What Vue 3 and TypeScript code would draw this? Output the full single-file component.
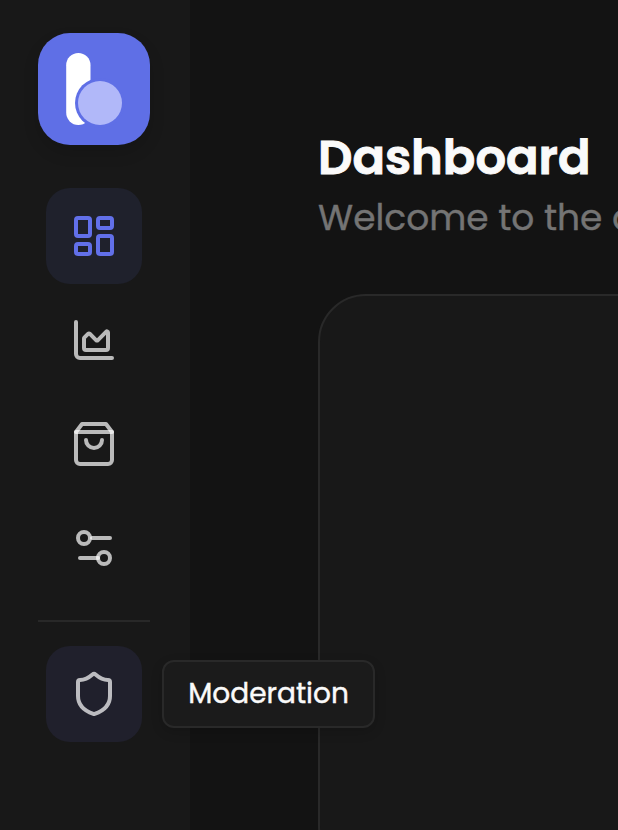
<script setup lang="ts">
interface Shape {
  tag: 'path' | 'rect' | 'circle'
  attrs: Record<string, string | number>
}
interface NavItem {
  id: string
  label: string
  shapes: Shape[]
}

const path = (d: string): Shape => ({ tag: 'path', attrs: { d } })
const rect = (x: number, y: number, width: number, height: number): Shape => ({
  tag: 'rect',
  attrs: { x, y, width, height, rx: 1 },
})
const circle = (cx: number, cy: number, r: number): Shape => ({ tag: 'circle', attrs: { cx, cy, r } })

const items: NavItem[] = [
  { id: 'dashboard', label: 'Dashboard', shapes: [rect(3, 3, 7, 9), rect(14, 3, 7, 5), rect(14, 12, 7, 9), rect(3, 16, 7, 5)] },
  {
    id: 'analytics',
    label: 'Analytics',
    shapes: [
      path('M3 3v16a2 2 0 0 0 2 2h16'),
      path('M7 11.207a.5.5 0 0 1 .146-.353l2-2a.5.5 0 0 1 .708 0l3.292 3.292a.5.5 0 0 0 .708 0l4.292-4.292a.5.5 0 0 1 .854.353V16a1 1 0 0 1-1 1H8a1 1 0 0 1-1-1z'),
    ],
  },
  {
    id: 'store',
    label: 'Store',
    shapes: [path('M6 2 3 6v14a2 2 0 0 0 2 2h14a2 2 0 0 0 2-2V6l-3-4Z'), path('M3 6h18'), path('M16 10a4 4 0 0 1-8 0')],
  },
  {
    id: 'settings',
    label: 'Settings',
    shapes: [path('M20 7h-9'), path('M14 17H5'), circle(17, 17, 3), circle(7, 7, 3)],
  },
]

const moderation: NavItem = {
  id: 'moderation',
  label: 'Moderation',
  shapes: [
    path('M20 13c0 5-3.5 7.5-7.66 8.95a1 1 0 0 1-.67-.01C7.5 20.5 4 18 4 13V6a1 1 0 0 1 1-1c2 0 4.5-1.2 6.24-2.72a1.17 1.17 0 0 1 1.52 0C14.51 3.81 17 5 19 5a1 1 0 0 1 1 1z'),
  ],
}
</script>

<template>
  <div class="shell">
    <aside class="sidebar">
      <div class="logo">
        <svg viewBox="0 0 112 112">
          <rect class="logo-stem" x="28.2" y="20" width="24.3" height="72" rx="12.15" />
          <circle class="logo-gap" cx="62" cy="70" r="25" />
          <circle class="logo-bowl" cx="62" cy="70" r="22" />
        </svg>
      </div>
      <nav class="nav">
        <a v-for="item in items" :key="item.id" class="nav-item" :class="{ active: item.id === 'dashboard' }" :aria-label="item.label">
          <svg class="icon" viewBox="0 0 24 24">
            <component :is="s.tag" v-for="(s, i) in item.shapes" :key="i" v-bind="s.attrs" />
          </svg>
        </a>
      </nav>
      <div class="divider"></div>
      <a class="nav-item hovered">
        <svg class="icon" viewBox="0 0 24 24">
          <component :is="s.tag" v-for="(s, i) in moderation.shapes" :key="i" v-bind="s.attrs" />
        </svg>
        <span class="tooltip"><span class="tooltip-text">{{ moderation.label }}</span></span>
      </a>
    </aside>
    <main class="content">
      <h1 class="title">Dashboard</h1>
      <p class="subtitle">Welcome to the d</p>
      <section class="panel"></section>
    </main>
  </div>
</template>

<style>
body {
  background: #131313;
  overflow: hidden;
}
</style>

<style scoped>
.shell {
  display: flex;
  width: 618px;
  height: 830px;
  overflow: hidden;
  background: #131313;
  font-family: Poppins, Inter, sans-serif;
}
.sidebar {
  box-sizing: border-box;
  width: 190px;
  flex: none;
  display: flex;
  flex-direction: column;
  align-items: center;
  padding: 33px 2px 0 0;
  background: #181818;
}
.logo {
  width: 112px;
  height: 112px;
  border-radius: 32px;
  background: #5f6fe6;
  box-shadow: 0 8px 16px rgba(0, 0, 0, 0.14);
}
.logo svg {
  display: block;
}
.logo-stem {
  fill: #fff;
}
.logo-gap {
  fill: #5f6fe6;
}
.logo-bowl {
  fill: #b1b8f9;
}
.nav {
  display: flex;
  flex-direction: column;
  gap: 8px;
  margin-top: 43px;
}
.nav-item {
  position: relative;
  display: flex;
  align-items: center;
  justify-content: center;
  width: 96px;
  height: 96px;
  border-radius: 24px;
  color: rgba(255, 255, 255, 0.7);
}
.nav-item.active {
  background: #1f212c;
  color: #6270e9;
}
.nav-item.hovered {
  background: #20202c;
}
.icon {
  width: 48px;
  height: 48px;
  fill: none;
  stroke: currentColor;
  stroke-width: 2;
  stroke-linecap: round;
  stroke-linejoin: round;
}
.divider {
  width: 112px;
  height: 2px;
  margin: 24px 0;
  background: #282828;
}
.tooltip {
  position: absolute;
  left: 116px;
  top: 14px;
  z-index: 1;
  box-sizing: border-box;
  width: 213px;
  height: 68px;
  display: flex;
  align-items: center;
  justify-content: center;
  border: 2px solid #292929;
  border-radius: 12px;
  background: #1b1b1b;
  box-shadow: 0 4px 12px rgba(0, 0, 0, 0.16);
  color: #fafafa;
}
.tooltip-text {
  font-size: 28px;
  line-height: 40px;
  font-weight: 400;
  white-space: nowrap;
  -webkit-text-stroke: 0.4px currentColor;
}
.content {
  flex: 1;
  min-width: 0;
  padding: 130px 0 0 128px;
}
.title {
  margin: 0;
  font-size: 48px;
  line-height: 56px;
  font-weight: 600;
  color: #fafafa;
  -webkit-text-stroke: 0.9px currentColor;
}
.subtitle {
  margin: 10px 0 0;
  font-size: 36px;
  line-height: 44px;
  font-weight: 400;
  color: #747474;
  white-space: nowrap;
  -webkit-text-stroke: 0.4px currentColor;
}
.panel {
  box-sizing: border-box;
  width: 640px;
  height: 580px;
  margin-top: 54px;
  border: 2px solid #292929;
  border-radius: 48px;
  background: #181818;
}
</style>
